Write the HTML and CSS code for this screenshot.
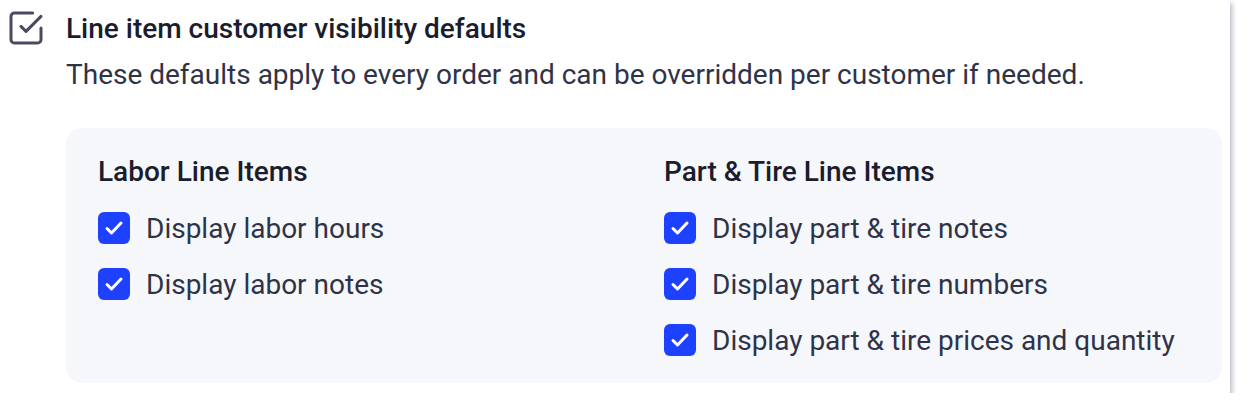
FILE: index.html
```html
<!DOCTYPE html>
<html lang="en">
<head>
  <meta charset="UTF-8" />
  <title>Line item visibility</title>
  <link rel="stylesheet" href="styles.css">
</head>
<body>
  <div class="card">
    <svg class="card-icon" viewBox="0 0 24 24" fill="none" stroke="currentColor" stroke-width="1.8" stroke-linecap="round" stroke-linejoin="round">
      <polyline points="9 11 12 14 21 5"></polyline>
      <path d="M21 12v7a2 2 0 0 1-2 2H5a2 2 0 0 1-2-2V5a2 2 0 0 1 2-2h11"></path>
    </svg>
    <div class="card-body">
      <h2 class="card-title">Line item customer visibility defaults</h2>
      <p class="card-desc">These defaults apply to every order and can be overridden per customer if needed.</p>

      <div class="options">
        <div class="option-group">
          <h3>Labor Line Items</h3>
          <label class="option"><span class="box"><svg viewBox="0 0 32 32"><polyline points="9 16.5 13.5 21 23 11"></polyline></svg></span>Display labor hours</label>
          <label class="option"><span class="box"><svg viewBox="0 0 32 32"><polyline points="9 16.5 13.5 21 23 11"></polyline></svg></span>Display labor notes</label>
        </div>
        <div class="option-group">
          <h3>Part &amp; Tire Line Items</h3>
          <label class="option"><span class="box"><svg viewBox="0 0 32 32"><polyline points="9 16.5 13.5 21 23 11"></polyline></svg></span>Display part &amp; tire notes</label>
          <label class="option"><span class="box"><svg viewBox="0 0 32 32"><polyline points="9 16.5 13.5 21 23 11"></polyline></svg></span>Display part &amp; tire numbers</label>
          <label class="option"><span class="box"><svg viewBox="0 0 32 32"><polyline points="9 16.5 13.5 21 23 11"></polyline></svg></span>Display part &amp; tire prices and quantity</label>
        </div>
      </div>
    </div>
  </div>
</body>
</html>
```

FILE: styles.css
```css
body {
  margin: 0;
  padding: 0;
  background: #fff;
  font-family: Roboto, "Liberation Sans", sans-serif;
  color: #2f3347;
}
.card {
  width: 1230px;
  box-sizing: border-box;
  display: grid;
  grid-template-columns: 60px 1fr;
  padding: 13px 8px 10px 6px;
  background: #fff;
  box-shadow: 2px 3px 5px rgba(70, 74, 110, 0.4);
}
.card-icon {
  width: 40px;
  height: 40px;
  margin-top: -5px;
  color: #4a4b5e;
}
.card-title {
  margin: 0;
  font-size: 28px;
  line-height: 32px;
  font-weight: 500;
  color: #1b1c2c;
}
.card-desc {
  margin: 14px 0 0;
  font-size: 28px;
  line-height: 32px;
}
.options {
  margin-top: 37px;
  background: #f6f7fb;
  border-radius: 16px;
  padding: 26px 32px 23px;
  display: grid;
  grid-template-columns: 1fr 1fr;
  column-gap: 40px;
}
.option-group {
  display: flex;
  flex-direction: column;
  gap: 16px;
}
.option-group h3 {
  margin: 0 0 2px;
  font-size: 28px;
  line-height: 36px;
  font-weight: 500;
  color: #1b1c2c;
}
.option {
  display: flex;
  align-items: center;
  gap: 16px;
  height: 40px;
  font-size: 28px;
}
.box {
  width: 32px;
  height: 32px;
  border-radius: 6px;
  background: #1e40ff;
  flex: none;
}
.box svg {
  width: 32px;
  height: 32px;
  display: block;
  fill: none;
  stroke: #fff;
  stroke-width: 3;
  stroke-linecap: round;
  stroke-linejoin: round;
}
```
